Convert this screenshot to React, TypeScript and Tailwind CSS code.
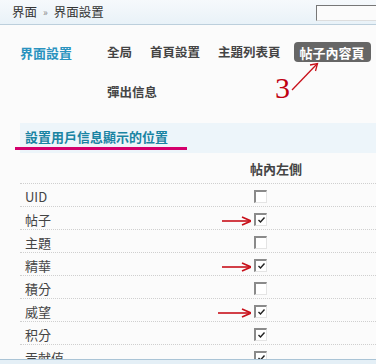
import React from "react";

const rows: { label: string; checked: boolean; arrow?: number }[] = [
  { label: "UID", checked: false },
  { label: "帖子", checked: true, arrow: 222 },
  { label: "主題", checked: false },
  { label: "精華", checked: true, arrow: 222 },
  { label: "積分", checked: false },
  { label: "威望", checked: true, arrow: 218 },
  { label: "积分", checked: true },
  { label: "贡献值", checked: true },
];

function Box({ checked }: { checked: boolean }) {
  return (
    <div className="w-[13px] h-[13px] bg-white border-t-2 border-l-2 border-t-[#8a8a8a] border-l-[#8a8a8a] border-b border-r border-b-[#e4e4e4] border-r-[#e4e4e4] flex items-center justify-center">
      {checked && (
        <svg width="9" height="8" viewBox="0 0 9 8">
          <path d="M1.5 4 L3.5 6 L7.5 1.5" stroke="#222" strokeWidth="1.4" fill="none" />
        </svg>
      )}
    </div>
  );
}

function Arrow({ width }: { width: number }) {
  return (
    <svg width={width} height="10" viewBox={`0 0 ${width} 10`} className="absolute" style={{ left: 0, top: -5 }}>
      <line x1="0" y1="5" x2={width - 2} y2="5" stroke="#c8101a" strokeWidth="1.6" />
      <path d={`M${width - 9} 1 L${width} 5 L${width - 9} 9`} stroke="#c8101a" strokeWidth="1.6" fill="none" />
    </svg>
  );
}

export default function App() {
  return (
    <div
      className="w-[376px] h-[364px] overflow-hidden relative bg-[#fbfbfb] text-[#444]"
      style={{ fontFamily: '"Noto Sans CJK TC", "Noto Sans", "Liberation Sans", sans-serif' }}
    >
      {/* top breadcrumb bar */}
      <div className="h-[25px] flex items-center justify-between bg-gradient-to-b from-[#f6f9fc] to-[#e9f2f8] border-b border-[#bccfdc]">
        <div className="pl-[12px] text-[12.5px] text-[#333] flex items-center gap-[6px] leading-none">
          <span>界面</span>
          <span className="text-[10px] text-[#888]">»</span>
          <span>界面設置</span>
        </div>
        <div className="w-[60px] h-[16px] bg-[#fbfbfb] border-t border-l border-[#777] border-b border-b-[#ddd] mt-[1px]" />
      </div>

      {/* nav */}
      <div className="flex mt-[17px] relative">
        <div className="w-[101px] pl-[20px] h-[20px] flex items-center text-[13px] font-bold text-[#2b93bf] leading-none">
          界面設置
        </div>
        <div className="flex flex-col">
          <div className="flex gap-[6px] h-[20px] items-center text-[12.5px] font-bold text-[#444] leading-none">
            <span className="px-[6px]">全局</span>
            <span className="px-[6px]">首頁設置</span>
            <span className="px-[6px]">主題列表頁</span>
            <span className="ml-[1px] px-[6px] h-[20px] flex items-center rounded-[4px] bg-[#666] text-white text-[13px]">
              帖子內容頁
            </span>
          </div>
          <div className="mt-[20px] h-[20px] flex items-center px-[6px] text-[12.5px] font-bold text-[#444] leading-none">
            彈出信息
          </div>
        </div>
        {/* annotation 3 */}
        <div
          className="absolute left-[275px] top-[31px] text-[30px] leading-none text-[#c00012]"
          style={{ fontFamily: '"Liberation Serif", serif' }}
        >
          3
        </div>
        <svg className="absolute left-[290px] top-[19px]" width="32" height="32" viewBox="0 0 32 32">
          <line x1="2" y1="29" x2="27" y2="3" stroke="#c8101a" strokeWidth="1.3" />
          <path d="M20 4 L27.5 2.5 L25.5 10" stroke="#c8101a" strokeWidth="1.3" fill="none" />
        </svg>
      </div>

      {/* section header */}
      <div className="mt-[21px] ml-[20px] h-[30px] bg-[#edf5fa] relative flex items-start">
        <div className="pl-[5px] pt-[5px] text-[13px] font-bold text-[#1a84a3] leading-[18px]">
          設置用戶信息顯示的位置
        </div>
        <div className="absolute left-[-5px] top-[24px] w-[172px] h-[3px] bg-[#d4006c]" />
      </div>

      {/* column header */}
      <div className="h-[30px] flex items-center pl-[250px] text-[13px] font-bold text-[#444] leading-none">
        帖內左側
      </div>

      {/* rows */}
      <div className="ml-[20px]">
        {rows.map((r) => (
          <div
            key={r.label}
            className="h-[23px] border-t border-dotted border-[#cfcfcf] flex items-center pt-[2px]"
          >
            <div className="w-[234px] pl-[5px] text-[13px] text-[#444] leading-none">{r.label}</div>
            <div className="relative">
              <Box checked={r.checked} />
              {r.arrow && (
                <div className="absolute top-[8px]" style={{ left: r.arrow - 254 }}>
                  <Arrow width={250 - r.arrow + 1} />
                </div>
              )}
            </div>
          </div>
        ))}
      </div>

      {/* bottom bar */}
      <div className="absolute left-0 bottom-0 w-full h-[5px] bg-[#e4eff6] border-t border-[#aac4d6]" />
    </div>
  );
}
